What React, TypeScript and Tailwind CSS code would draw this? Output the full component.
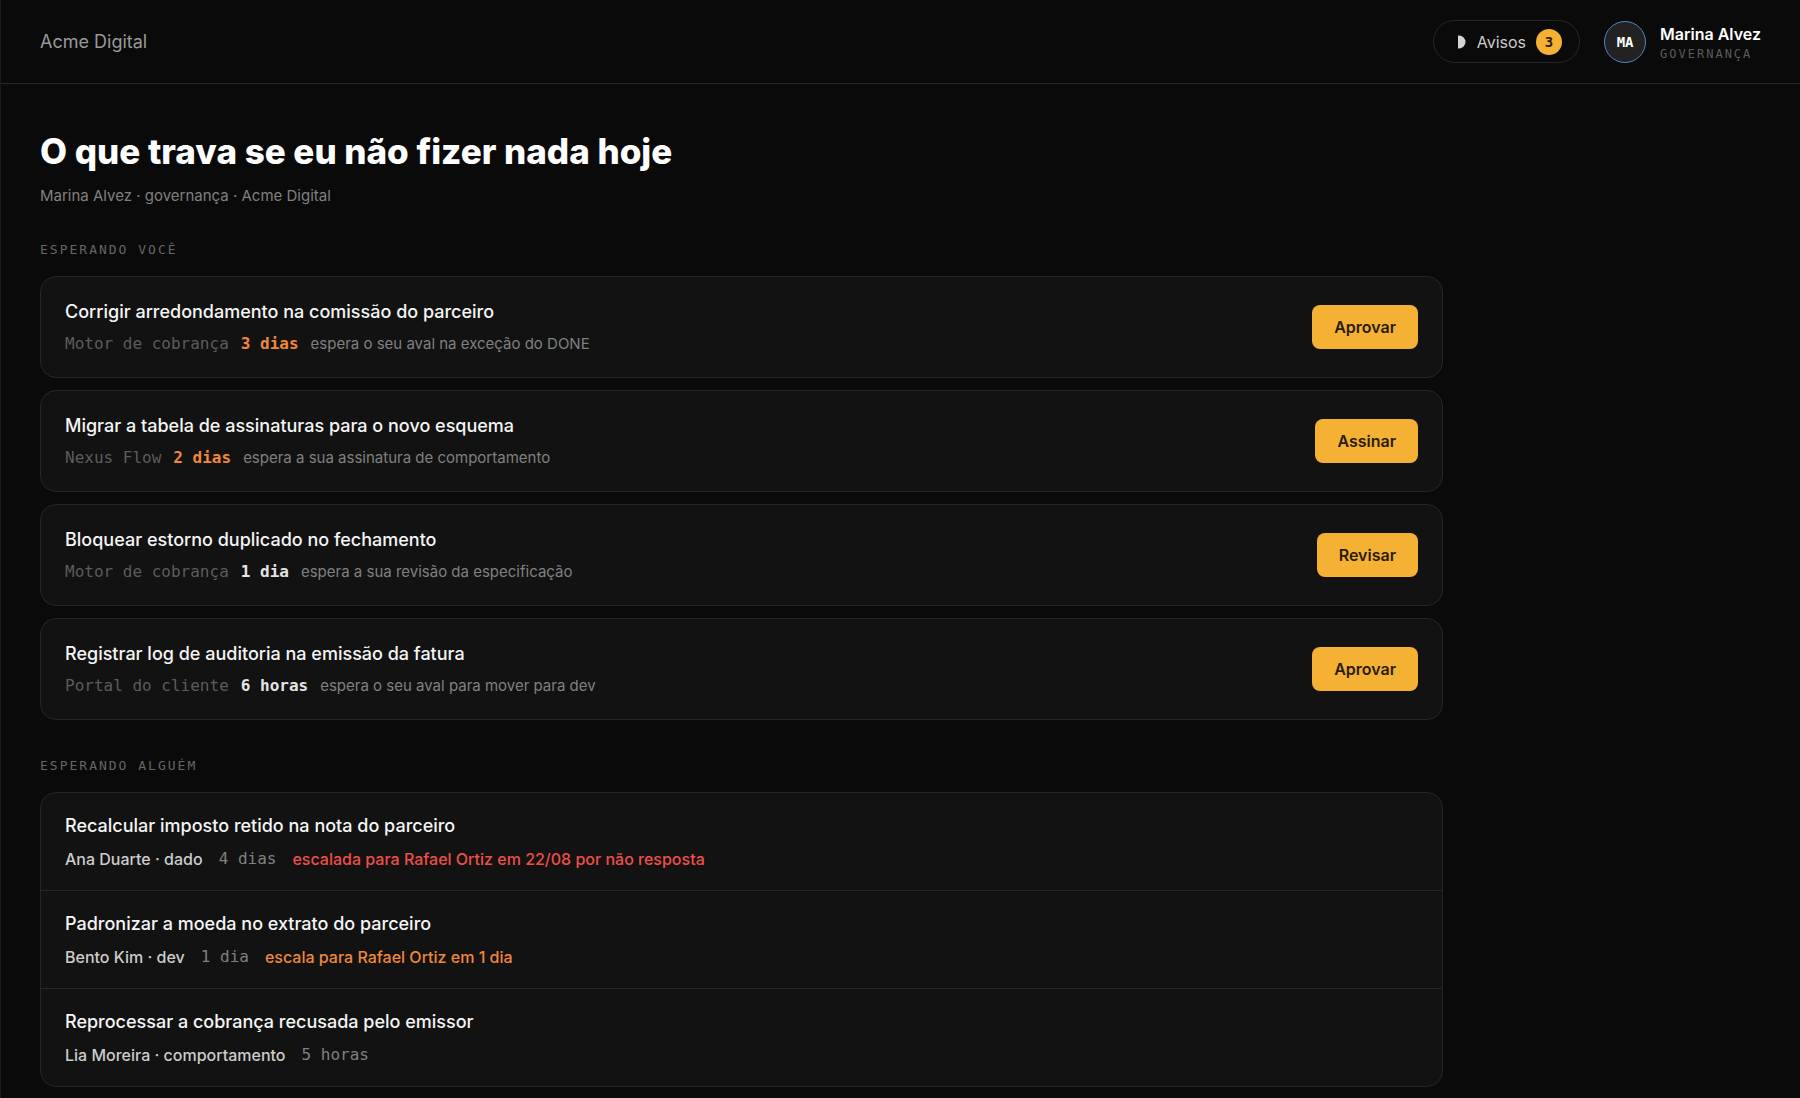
import clsx from "clsx";

type WaitingTask = {
  title: string;
  project: string;
  age: string;
  late?: boolean;
  reason: string;
  action: string;
};

type DelegatedTask = {
  title: string;
  owner: string;
  age: string;
  note?: string;
  escalated?: boolean;
};

const waitingForYou: WaitingTask[] = [
  {
    title: "Corrigir arredondamento na comissão do parceiro",
    project: "Motor de cobrança",
    age: "3 dias",
    late: true,
    reason: "espera o seu aval na exceção do DONE",
    action: "Aprovar",
  },
  {
    title: "Migrar a tabela de assinaturas para o novo esquema",
    project: "Nexus Flow",
    age: "2 dias",
    late: true,
    reason: "espera a sua assinatura de comportamento",
    action: "Assinar",
  },
  {
    title: "Bloquear estorno duplicado no fechamento",
    project: "Motor de cobrança",
    age: "1 dia",
    reason: "espera a sua revisão da especificação",
    action: "Revisar",
  },
  {
    title: "Registrar log de auditoria na emissão da fatura",
    project: "Portal do cliente",
    age: "6 horas",
    reason: "espera o seu aval para mover para dev",
    action: "Aprovar",
  },
];

const waitingForOthers: DelegatedTask[] = [
  {
    title: "Recalcular imposto retido na nota do parceiro",
    owner: "Ana Duarte · dado",
    age: "4 dias",
    note: "escalada para Rafael Ortiz em 22/08 por não resposta",
    escalated: true,
  },
  {
    title: "Padronizar a moeda no extrato do parceiro",
    owner: "Bento Kim · dev",
    age: "1 dia",
    note: "escala para Rafael Ortiz em 1 dia",
  },
  {
    title: "Reprocessar a cobrança recusada pelo emissor",
    owner: "Lia Moreira · comportamento",
    age: "5 horas",
  },
];

const mono = "font-['DejaVu_Sans_Mono',monospace]";

const Header = () => (
  <header className="flex items-center justify-between h-[84px] px-[39px] border-b border-[#262626]">
    <span className="text-lg text-[#999]">Acme Digital</span>

    <div className="flex items-center gap-6">
      <button className="flex items-center gap-[10px] h-[43px] pl-[23px] pr-[17px] rounded-full border border-[#262626] text-base text-[#ccc]">
        <svg width="10" height="14" viewBox="0 0 10 14" aria-hidden="true">
          <path d="M1 0.5H2A6.5 6.5 0 0 1 2 13.5H1Z" fill="#d4d4d4" />
        </svg>
        Avisos
        <span
          className={clsx(
            mono,
            "flex items-center justify-center size-[26px] rounded-full bg-[#f5b133] text-sm font-bold text-[#2a1c00]",
          )}
        >
          3
        </span>
      </button>

      {/* user */}
      <div className="flex items-center gap-[14px]">
        <div
          className={clsx(
            mono,
            "flex items-center justify-center size-[42px] rounded-full border border-[#5580cc] bg-[#222] text-sm font-bold text-white",
          )}
        >
          MA
        </div>
        <div className="pt-1">
          <p className="text-base leading-5 font-semibold text-white">
            Marina Alvez
          </p>
          <p
            className={clsx(
              mono,
              "text-xs leading-5 tracking-[2px] uppercase text-[#5c5c5c]",
            )}
          >
            Governança
          </p>
        </div>
      </div>
    </div>
  </header>
);

const SectionLabel = ({ children }: { children: string }) => (
  <h2
    className={clsx(
      mono,
      "text-[13px] leading-5 tracking-[2px] uppercase text-[#666]",
    )}
  >
    {children}
  </h2>
);

const WaitingCard = ({ task }: { task: WaitingTask }) => (
  <li className="flex items-center justify-between gap-6 px-6 py-[21px] rounded-2xl border border-[#262626] bg-[#121212]">
    <div>
      <h3 className="text-lg leading-7 font-medium text-[#f5f5f5]">
        {task.title}
      </h3>
      <div className="flex flex-wrap items-center gap-x-3 mt-[6px]">
        <span className={clsx(mono, "text-base leading-6 text-[#5c5c5c]")}>
          {task.project}
        </span>
        <span
          className={clsx(
            mono,
            "text-base leading-6 font-bold",
            task.late ? "text-[#f0883a]" : "text-[#e5e5e5]",
          )}
        >
          {task.age}
        </span>
        <span className="text-[15px] leading-6 text-[#808080]">
          {task.reason}
        </span>
      </div>
    </div>
    <button className="h-11 px-[22px] rounded-lg bg-[#f5b133] text-base font-semibold text-[#2a1c00]">
      {task.action}
    </button>
  </li>
);

const DelegatedRow = ({ task }: { task: DelegatedTask }) => (
  <li className="px-6 py-[19px] border-b border-[#262626] last:border-b-0">
    <h3 className="text-lg leading-7 font-medium text-[#f5f5f5]">
      {task.title}
    </h3>
    <div className="flex flex-wrap items-center gap-x-4 mt-[7px]">
      <span className="text-base leading-6 font-medium text-[#ccc]">
        {task.owner}
      </span>
      <span className={clsx(mono, "text-base leading-6 text-[#808080]")}>
        {task.age}
      </span>
      {task.note && (
        <span
          className={clsx(
            "text-base leading-6 font-medium",
            task.escalated ? "text-[#ee4f48]" : "text-[#f0883a]",
          )}
        >
          {task.note}
        </span>
      )}
    </div>
  </li>
);

const App = () => {
  return (
    <div className="min-h-screen border-l border-[#1a1a1a] bg-[#0a0a0a] font-[Inter,sans-serif]">
      <Header />

      <main className="px-[39px] pt-11 pb-3">
        <h1 className="text-[35px] leading-[46px] font-extrabold text-white">
          O que trava se eu não fizer nada hoje
        </h1>
        <p className="mt-2 text-[15px] leading-7 text-[#808080]">
          Marina Alvez · governança · Acme Digital
        </p>

        <section className="max-w-[1403px] mt-[30px]">
          <SectionLabel>Esperando você</SectionLabel>
          <ul className="flex flex-col gap-3 mt-4">
            {waitingForYou.map((task) => (
              <WaitingCard key={task.title} task={task} />
            ))}
          </ul>
        </section>

        <section className="max-w-[1403px] mt-9">
          <SectionLabel>Esperando alguém</SectionLabel>
          <ul className="mt-4 rounded-2xl border border-[#262626] bg-[#121212]">
            {waitingForOthers.map((task) => (
              <DelegatedRow key={task.title} task={task} />
            ))}
          </ul>
        </section>
      </main>
    </div>
  );
};

export default App;
